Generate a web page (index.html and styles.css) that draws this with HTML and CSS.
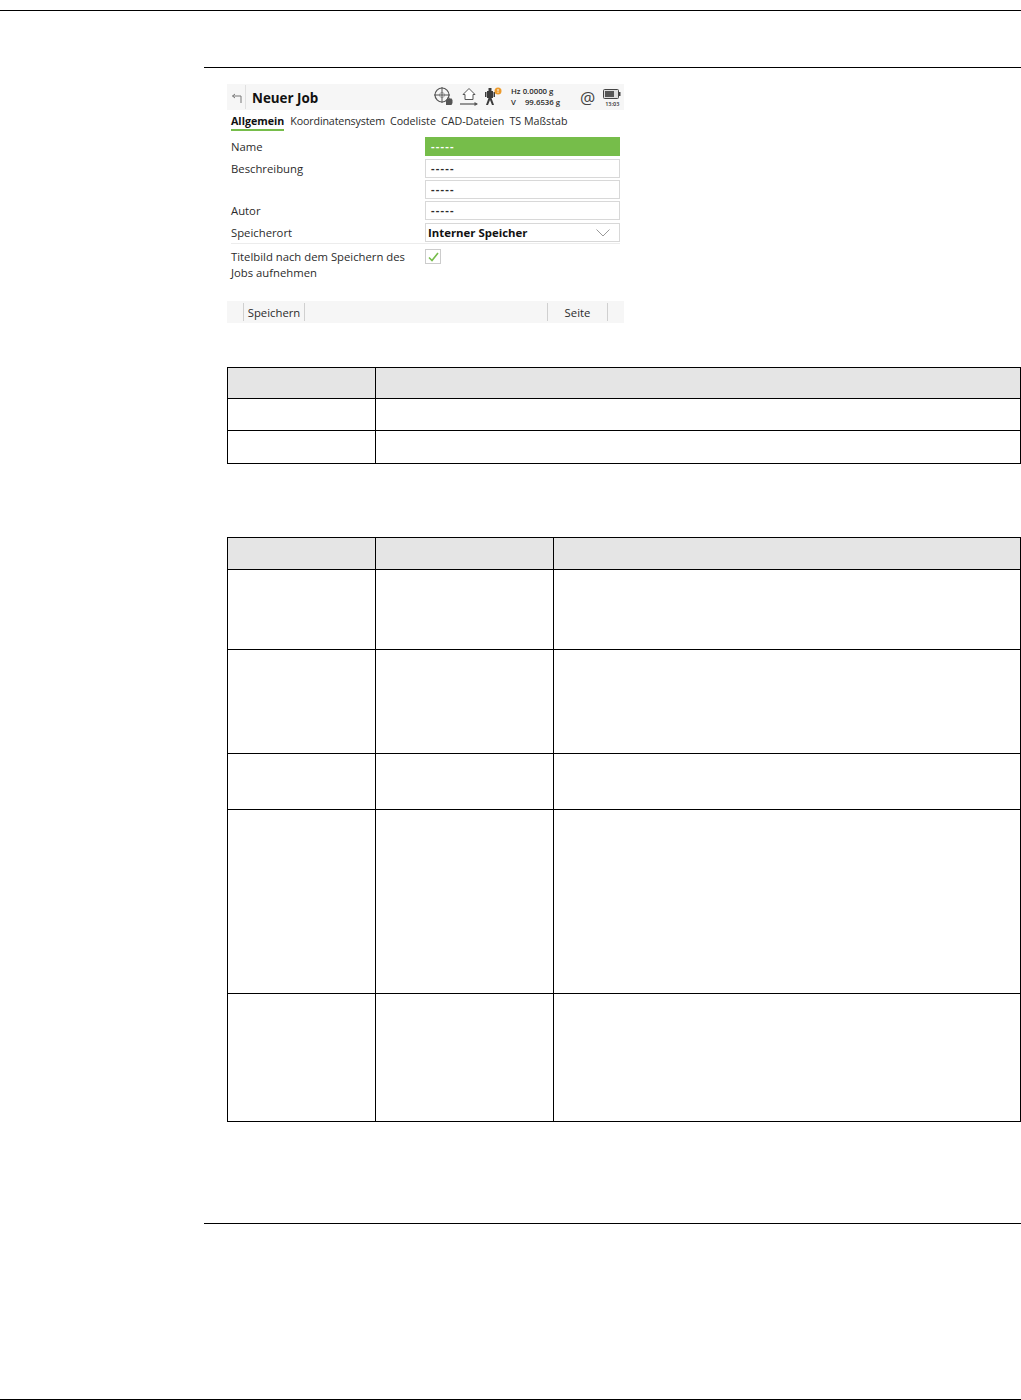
FILE: index.html
```html
<!DOCTYPE html>
<html>
<head>
	<meta charset="UTF-8">
	<title>Neuer Job</title>
	<link rel="stylesheet" href="styles.css">
</head>
<body>
	<div class="page-top"></div>
	<main class="content">
		<div class="section-rule"></div>
		<div class="device">
			<header class="title-bar">
				<span class="back">
					<svg width="12" height="12" viewBox="0 0 12 12"><path d="M4 1 1.500 3 4 5M1.500 3H10V10" fill="none" stroke="#777" stroke-width="1"/></svg>
				</span>
				<span class="job-title">Neuer Job</span>
				<span class="status-icons">
					<svg class="ico-target" width="20" height="20" viewBox="0 0 20 20">
						<circle cx="8" cy="8" r="7" fill="none" stroke="#555" stroke-width="1.200"/>
						<circle cx="8" cy="8" r="2.500" fill="none" stroke="#aaa" stroke-width="1"/>
						<path d="M8 0V16M0 8H16" stroke="#555" stroke-width="1"/>
						<path d="M12 18V13L13 12 13.500 10 14.500 12 15.500 10.500 16 12 17 11 18.500 13V16L17.500 18Z" fill="#555"/>
					</svg>
					<svg class="ico-home" width="18" height="20" viewBox="0 0 18 20">
						<path d="M9 1.500 3 7.500H5V12.500H13V7.500H15Z" fill="#fff" stroke="#555" stroke-width="1"/>
						<path d="M0 17H17" stroke="#555" stroke-width="1.200"/>
						<path d="M18 17 14.500 15V19Z" fill="#555"/>
					</svg>
					<svg class="ico-station" width="18" height="20" viewBox="0 0 18 20">
						<path d="M3.500 1H6.500V4H8V11H6.500L9 18H7L5 13 3 18H1L3.500 11H2V4H3.500Z" fill="#3c3c3c"/>
						<path d="M0 5H1.500V10H0ZM8.500 5H10V10H8.500Z" fill="#3c3c3c"/>
						<circle cx="13" cy="4" r="3.500" fill="#ed9b2c"/>
						<path d="M13 2V4.500M13 5.200V6" stroke="#fff" stroke-width="1"/>
					</svg>
					<span class="angles">
						<span class="angle-row"><span>Hz</span> <span>0.0000 g</span></span>
						<span class="angle-row"><span>V</span> <span class="angle-v">99.6536 g</span></span>
					</span>
					<span class="at">@</span>
					<span class="power">
						<svg width="18" height="10" viewBox="0 0 18 10">
							<rect x="0.500" y="0.500" width="15" height="9" rx="1" fill="#ddd" stroke="#444"/>
							<rect x="2" y="2" width="9" height="6" fill="#555"/>
							<path d="M16 3H17.500V7H16Z" fill="#444"/>
						</svg>
						<span class="clock">13:03</span>
					</span>
				</span>
			</header>
			<nav class="tabs">
				<span class="tab tab-on">Allgemein</span>
				<span class="tab tab-coords">Koordinatensystem</span>
				<span class="tab">Codeliste</span>
				<span class="tab">CAD-Dateien</span>
				<span class="tab">TS Maßstab</span>
			</nav>
			<div class="form">
				<div class="form-row">
					<span class="label">Name</span>
					<span class="field field-on">-----</span>
				</div>
				<div class="form-row">
					<span class="label">Beschreibung</span>
					<span class="field">-----</span>
				</div>
				<div class="form-row">
					<span class="label"></span>
					<span class="field">-----</span>
				</div>
				<div class="form-row">
					<span class="label">Autor</span>
					<span class="field">-----</span>
				</div>
				<div class="form-row form-row-last">
					<span class="label">Speicherort</span>
					<span class="field field-select">Interner Speicher
						<svg width="14" height="8" viewBox="0 0 14 8"><path d="M.5.5 7 7 13.500.5" fill="none" stroke="#999"/></svg>
					</span>
				</div>
				<div class="check-row">
					<span class="label">Titelbild nach dem Speichern des Jobs aufnehmen</span>
					<span class="checkbox">
						<svg width="11" height="10" viewBox="0 0 11 10"><path d="M1 5.500 4 8.500 10 1" fill="none" stroke="#76bd4a" stroke-width="1.600"/></svg>
					</span>
				</div>
			</div>
			<footer class="softkeys">
				<span class="softkey softkey-save">Speichern</span>
				<span class="softkey softkey-page">Seite</span>
			</footer>
		</div>

		<div class="grid grid-two grid-first">
			<div class="cell head"></div><div class="cell head"></div>
			<div class="cell row-s"></div><div class="cell row-s"></div>
			<div class="cell row-t"></div><div class="cell row-t"></div>
		</div>

		<div class="grid grid-three grid-second">
			<div class="cell head2"></div><div class="cell head2"></div><div class="cell head2"></div>
			<div class="cell row-a"></div><div class="cell row-a"></div><div class="cell row-a"></div>
			<div class="cell row-b"></div><div class="cell row-b"></div><div class="cell row-b"></div>
			<div class="cell row-c"></div><div class="cell row-c"></div><div class="cell row-c"></div>
			<div class="cell row-d"></div><div class="cell row-d"></div><div class="cell row-d"></div>
			<div class="cell row-e"></div><div class="cell row-e"></div><div class="cell row-e"></div>
		</div>

		<div class="section-rule rule-end"></div>
	</main>
	<div class="page-bottom"></div>
</body>
</html>
```

FILE: styles.css
```css
:root {
	--line: #000;
	--head: #e5e5e5;
	--green: #76bd4a;
	--ui-text: #2b2b2b;
	--ui-bar: #f6f6f6;
}
* {
	box-sizing: border-box;
}
body {
	background: #fff;
	font-family: "Open Sans", "Noto Sans", sans-serif;
	margin: 0;
	height: 1400px;
	overflow: hidden;
	display: flex;
	flex-direction: column;
	padding-top: 10px;
}
.page-top, .page-bottom {
	height: 1px;
	background: var(--line);
	flex: none;
}
.page-bottom {
	margin-top: auto;
}
.content {
	padding: 56px 0 0 204px;
}
.section-rule {
	height: 1px;
	background: var(--line);
}
.rule-end {
	margin-top: 101px;
}

/* instrument screen */
.device {
	width: 397px;
	margin: 16px 0 0 23px;
	color: var(--ui-text);
	font-size: 11.3px;
}
.title-bar {
	background: var(--ui-bar);
	height: 26px;
	display: flex;
	align-items: center;
}
.back {
	width: 19px;
	height: 24px;
	padding: 8px 0 0 4px;
	border-right: 1px solid #e0e0e0;
}
.back svg {
	display: block;
}
.job-title {
	color: #111;
	font-size: 13.4px;
	font-weight: 700;
	margin: 1px 0 0 6px;
}
.status-icons {
	margin-left: auto;
	display: flex;
	align-items: center;
	width: 191px;
	height: 100%;
}
.status-icons svg {
	display: block;
}
.ico-target {
	margin-left: 1px;
}
.ico-home {
	margin-left: 6px;
}
.ico-station {
	margin-left: 7px;
}
.angles {
	margin-left: 8px;
	font-size: 7.8px;
	font-weight: 600;
	line-height: 11px;
	width: 61px;
	white-space: nowrap;
}
.angle-row {
	display: block;
}
.angle-v {
	margin-left: 7px;
}
.at {
	font-size: 17px;
	color: #444;
	margin-left: 8px;
}
.power {
	margin-left: 8px;
	display: flex;
	flex-direction: column;
	align-items: center;
	padding-top: 3px;
}
.clock {
	font-size: 5.5px;
	font-weight: 600;
	line-height: 8px;
	margin-top: 1px;
}
.tabs {
	display: flex;
	gap: 5px;
	padding: 3px 0 0 4px;
	height: 26px;
	font-size: 10.7px;
	white-space: nowrap;
}
.tab {
	height: 18px;
	line-height: 17px;
}
.tab-on {
	font-weight: 700;
	color: #111;
	border-bottom: 2px solid var(--green);
	margin-right: 1px;
}
.tab-coords {
	letter-spacing: -.15px;
}
.form {
	padding: 0 4px;
}
.form-row {
	display: grid;
	grid-template-columns: 194px 195px;
	height: 21.400px;
	align-items: center;
}
.form-row-last {
	border-bottom: 1px solid #ececec;
	height: 22.900px;
}
.field {
	height: 19px;
	border: 1px solid #d8d8d8;
	background: #fff;
	padding-left: 5px;
	font-weight: 700;
	line-height: 16px;
	letter-spacing: 1.200px;
	font-size: 11px;
}
.field-on {
	background: var(--green);
	border-color: var(--green);
	color: #fff;
}
.field-select {
	font-size: 11.4px;
	letter-spacing: 0;
	color: #111;
	padding-left: 2px;
	display: flex;
	align-items: center;
	justify-content: space-between;
	padding-right: 9px;
}
.check-row {
	display: grid;
	grid-template-columns: 194px 16px;
	padding-top: 5px;
	height: 56.500px;
}
.check-row .label {
	line-height: 16px;
	width: 180px;
}
.checkbox {
	width: 16px;
	height: 15px;
	border: 1px solid #ccc;
	display: grid;
	place-items: center;
}
.softkeys {
	background: var(--ui-bar);
	height: 22px;
	display: flex;
	align-items: center;
	padding-left: 16px;
}
.softkey {
	height: 18px;
	line-height: 20px;
	text-align: center;
	border-left: 1px solid #d0d0d0;
}
.softkey-save {
	width: 62px;
	border-right: 1px solid #d0d0d0;
}
.softkey-page {
	width: 61px;
	margin-left: auto;
	margin-right: 16px;
	border-right: 1px solid #d0d0d0;
}

/* ruled tables, cells are empty in the source */
.grid {
	margin-left: 23px;
	width: 794px;
	display: grid;
	border-top: 1px solid var(--line);
	border-left: 1px solid var(--line);
}
.grid-two {
	grid-template-columns: 148px 1fr;
}
.grid-three {
	grid-template-columns: 148px 178px 1fr;
}
.grid-first {
	margin-top: 44px;
}
.grid-second {
	margin-top: 73px;
}
.cell {
	border-right: 1px solid var(--line);
	border-bottom: 1px solid var(--line);
}
.head {
	height: 31px;
	background: var(--head);
}
.head2 {
	height: 32px;
	background: var(--head);
}
.row-s { height: 32px; }
.row-t { height: 33px; }
.row-a { height: 80px; }
.row-b { height: 104px; }
.row-c { height: 56px; }
.row-d { height: 184px; }
.row-e { height: 128px; }
```
